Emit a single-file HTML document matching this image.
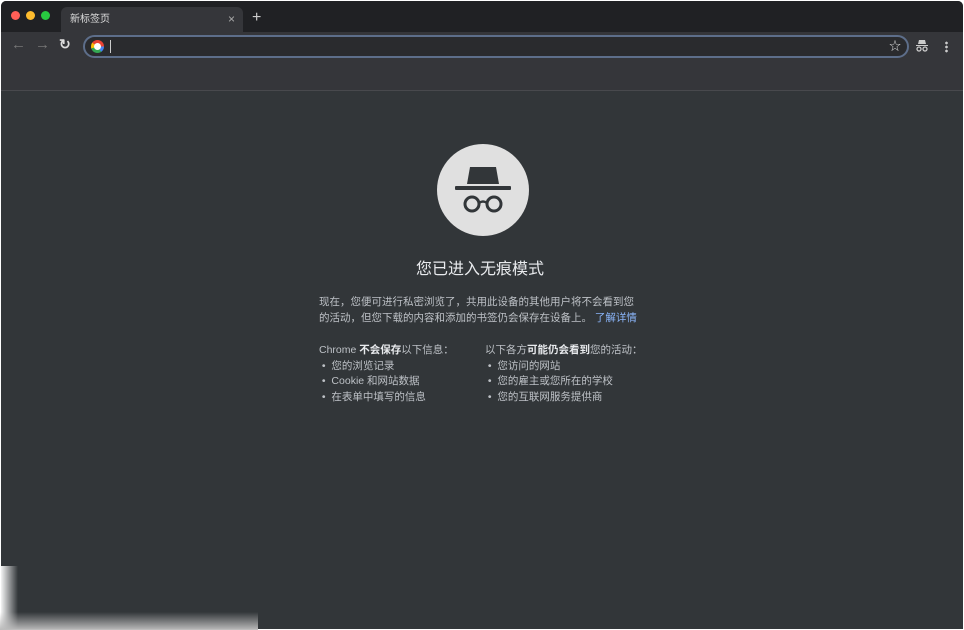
<!DOCTYPE html>
<html><head><meta charset="utf-8"><style>
body{margin:0;width:964px;height:630px;background:#fff;position:relative;overflow:hidden;font-family:"Liberation Sans","Noto Sans CJK SC",sans-serif}
.win{position:absolute;left:1px;top:1px;width:962px;height:628px;background:#323639;border-radius:5px 5px 0 0;overflow:hidden}
.tabs{position:absolute;left:0;top:0;width:100%;height:31px;background:#202124}
.tab{position:absolute;left:60px;top:6px;width:182px;height:25px;background:#35363a;border-radius:6px 6px 0 0;color:#ddd;font-size:10px;line-height:25px}
.dot{position:absolute;top:10px;width:9px;height:9px;border-radius:50%}
.tool{position:absolute;left:0;top:31px;width:100%;height:58px;background:#35363a;border-bottom:1px solid #48494d}
.omni{position:absolute;left:82px;top:3px;width:822px;height:19px;border:2px solid #5d6e8a;border-radius:12px;background:#2a2b2e}
.content{position:absolute;top:90px;left:0;width:100%;bottom:0;background:#323639}
.t{position:absolute;color:#bdc1c6;font-size:10.5px;white-space:nowrap}
b{color:#e8eaed;font-weight:bold}
</style></head><body>
<div class="win">
<div class="tabs">
<div class="dot" style="left:10px;background:#ff5f57"></div>
<div class="dot" style="left:25px;background:#febc2e"></div>
<div class="dot" style="left:40px;background:#28c840"></div>
<div class="tab"><span style="margin-left:9px">新标签页</span><span style="position:absolute;right:8px;color:#aaa;font-size:12px">×</span></div>
<div style="position:absolute;left:251px;top:8px;color:#ccc;font-size:16px">+</div>
</div>
<div class="tool">
<div style="position:absolute;left:10px;top:4px;color:#777;font-size:15px">←</div>
<div style="position:absolute;left:34px;top:4px;color:#777;font-size:15px">→</div>
<div style="position:absolute;left:58px;top:4px;color:#ddd;font-size:14px;font-weight:bold">↻</div>
<div class="omni">
<div style="position:absolute;left:6px;top:3px;width:13px;height:13px;border-radius:50%;background:conic-gradient(#ea4335 0 25%,#4285f4 25% 40%,#34a853 40% 70%,#fbbc05 70% 85%,#ea4335 85%)"><div style="position:absolute;left:3px;top:3px;width:7px;height:7px;border-radius:50%;background:#fff"></div></div>
<div style="position:absolute;left:25px;top:3px;width:1px;height:13px;background:#ccc"></div>
<div style="position:absolute;right:6px;top:0px;color:#ddd;font-size:12px">☆</div>
</div>
<svg style="position:absolute;left:914px;top:8px" width="14" height="12" viewBox="0 0 14 12"><path d="M4 0h6l1 4H3z M1 5h12v1H1z" fill="#ccc"/><circle cx="4" cy="9" r="2" fill="none" stroke="#ccc" stroke-width="1.3"/><circle cx="10" cy="9" r="2" fill="none" stroke="#ccc" stroke-width="1.3"/></svg>
<div style="position:absolute;left:944px;top:9px;width:3px;height:12px;background:radial-gradient(circle,#ccc 1.2px,transparent 1.5px) 0 0/3px 4px"></div>
</div>
<div class="content">
<svg style="position:absolute;left:436px;top:53px" width="92" height="92" viewBox="0 0 92 92">
<circle cx="46" cy="46" r="46" fill="#e0e0e0"/>
<path d="M33 23 L59 23 L62 40 L30 40 Z" fill="#323639"/>
<rect x="18" y="42" width="56" height="4" rx="1" fill="#323639"/>
<circle cx="35" cy="60" r="7" fill="none" stroke="#323639" stroke-width="3"/>
<circle cx="57" cy="60" r="7" fill="none" stroke="#323639" stroke-width="3"/>
<path d="M42 59 Q46 56 50 59" fill="none" stroke="#323639" stroke-width="2.5"/>
</svg>
<div class="t" style="left:415px;top:164px;font-size:16px;color:#e8eaed">您已进入无痕模式</div>
<div class="t" style="left:318px;top:203px;line-height:16px">现在，您便可进行私密浏览了，共用此设备的其他用户将不会看到您<br>的活动，但您下载的内容和添加的书签仍会保存在设备上。 <span style="color:#8ab4f8">了解详情</span></div>
<div class="t" style="left:318px;top:252px;line-height:15.5px">Chrome <b>不会保存</b>以下信息：<br>&nbsp;•&nbsp; 您的浏览记录<br>&nbsp;•&nbsp; Cookie 和网站数据<br>&nbsp;•&nbsp; 在表单中填写的信息</div>
<div class="t" style="left:484px;top:252px;line-height:15.5px">以下各方<b>可能仍会看到</b>您的活动：<br>&nbsp;•&nbsp; 您访问的网站<br>&nbsp;•&nbsp; 您的雇主或您所在的学校<br>&nbsp;•&nbsp; 您的互联网服务提供商</div>
</div>
</div>
<div style="position:absolute;left:0;top:566px;width:18px;height:64px;background:linear-gradient(90deg,#fff,rgba(50,54,57,0))"></div>
<div style="position:absolute;left:0;top:612px;width:258px;height:18px;background:linear-gradient(rgba(50,54,57,0),#bbb)"></div>
</body></html>
